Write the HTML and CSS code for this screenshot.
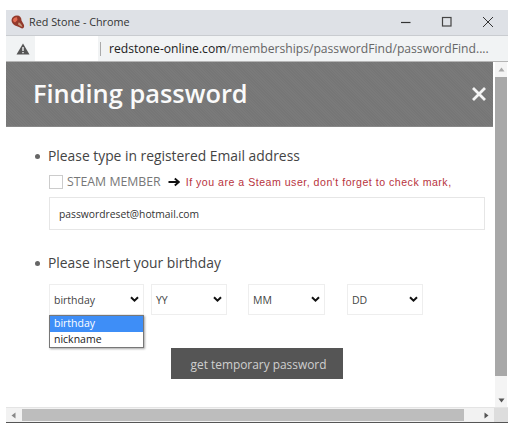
FILE: index.html
```html
<!DOCTYPE html>
<html lang="en">
<head>
<meta charset="utf-8">
<title>Red Stone - Chrome</title>
<link rel="stylesheet" href="styles.css">
</head>
<body>
<div class="window">
  <div class="titlebar">
    <svg class="favicon" width="14" height="14" viewBox="0 0 14 14"><path d="M0.5 5 C1 2 3 0.5 6 0.5 C9 0.5 10.5 2.5 10.5 5.5 L13 10 C13.5 12 12.5 13.5 11 13.5 L8 12 L4 10.5 C2 9.5 0.5 7.5 0.5 5 Z" fill="#93392b"/><path d="M2 5 C2.5 3 4 2 6 2.3 L6.5 5 L4 7.5 C2.8 7 2 6 2 5 Z" fill="#e26b52"/><path d="M7.5 7.5 C9 7.5 10.5 9 11.5 12 L9 11 L7 9.5 Z" fill="#c79a7c"/></svg>
    <span class="title">Red Stone - Chrome</span>
    <div class="controls">
      <svg width="14" height="14" viewBox="0 0 14 14"><path d="M2 7.5 H11.5" stroke="#333" stroke-width="1.2"/></svg>
      <svg width="14" height="14" viewBox="0 0 14 14"><rect x="2.5" y="2.5" width="8.5" height="8.5" fill="none" stroke="#444" stroke-width="1.2"/></svg>
      <svg width="14" height="14" viewBox="0 0 14 14"><path d="M2 2 L12 12 M12 2 L2 12" stroke="#333" stroke-width="1"/></svg>
    </div>
  </div>
  <div class="addressbar">
    <svg class="warn" width="14" height="12" viewBox="0 0 14 12"><path d="M7 0.5 L13.5 11.5 H0.5 Z" fill="#555"/><path d="M6.3 4 H7.7 V8 H6.3 Z M6.3 8.9 H7.7 V10.3 H6.3 Z" fill="#f1f3f4"/></svg>
    <div class="blank"></div>
    <div class="sep"></div>
    <div class="url">redstone-online.com<span class="path">/memberships/passwordFind/passwordFind....</span></div>
  </div>
  <div class="viewport">
    <main class="page">
      <header class="banner">
        <h1>Finding password</h1>
        <svg class="close" width="16" height="16" viewBox="0 0 16 16"><path d="M2 2 L14 14 M14 2 L2 14" stroke="#f4f4f4" stroke-width="2.8"/></svg>
      </header>
      <section class="section first">
        <h2 class="bullet">Please type in registered Email address</h2>
        <div class="steam">
          <span class="check"></span>
          <span class="steam-label">STEAM MEMBER</span>
          <svg class="arrow" width="12" height="10" viewBox="0 0 12 10"><path d="M0.5 5 H10.5 M6.8 1.5 L10.8 5 L6.8 8.5" fill="none" stroke="#111" stroke-width="1.8"/></svg>
          <span class="notice">If you are a Steam user, don't forget to check mark,</span>
        </div>
        <div class="field">passwordreset@hotmail.com</div>
      </section>
      <section class="section second">
        <h2 class="bullet">Please insert your birthday</h2>
        <div class="selects">
          <div class="select w-type">birthday<svg class="chev" width="9" height="7" viewBox="0 0 9 7"><path d="M1 1.2 L4.5 4.7 L8 1.2" fill="none" stroke="#111" stroke-width="2"/></svg>
            <ul class="menu">
              <li class="active">birthday</li>
              <li>nickname</li>
            </ul>
          </div>
          <div class="select w-yy">YY<svg class="chev" width="9" height="7" viewBox="0 0 9 7"><path d="M1 1.2 L4.5 4.7 L8 1.2" fill="none" stroke="#111" stroke-width="2"/></svg></div>
          <div class="select w-mm">MM<svg class="chev" width="9" height="7" viewBox="0 0 9 7"><path d="M1 1.2 L4.5 4.7 L8 1.2" fill="none" stroke="#111" stroke-width="2"/></svg></div>
          <div class="select w-dd">DD<svg class="chev" width="9" height="7" viewBox="0 0 9 7"><path d="M1 1.2 L4.5 4.7 L8 1.2" fill="none" stroke="#111" stroke-width="2"/></svg></div>
        </div>
        <button class="submit" type="button">get temporary password</button>
      </section>
    </main>
    <div class="vscroll">
      <svg width="7" height="5" viewBox="0 0 7 5"><path d="M3.5 0.5 L6.5 4.5 H0.5 Z" fill="#aaa"/></svg>
      <div class="vthumb"></div>
      <svg width="7" height="5" viewBox="0 0 7 5"><path d="M0.5 0.5 H6.5 L3.5 4.5 Z" fill="#555"/></svg>
    </div>
  </div>
  <div class="hscroll">
    <svg width="5" height="7" viewBox="0 0 5 7"><path d="M4.5 0.5 V6.5 L0.5 3.5 Z" fill="#888"/></svg>
    <div class="hthumb"></div>
    <svg width="5" height="7" viewBox="0 0 5 7"><path d="M0.5 0.5 V6.5 L4.5 3.5 Z" fill="#555"/></svg>
    <div class="corner"></div>
  </div>
</div>
</body>
</html>
```

FILE: styles.css
```css
* { box-sizing: border-box; }
html, body { margin: 0; padding: 0; background: #fff; }
body { width: 518px; height: 430px; overflow: hidden; font-family: "Open Sans", "Noto Sans", sans-serif; }
.window { margin: 10px 0 0 6px; width: 502px; height: 413px; display: flex; flex-direction: column; border-bottom: 1px solid #555; }
.titlebar { height: 26px; flex: none; background: #dee1e6; display: flex; align-items: center; padding: 0 13px 2px 5px; border-bottom: 1px solid #c9ccd0; }
.favicon { flex: none; }
.title { margin-left: 4px; font-size: 10.8px; color: #333; }
.controls { margin-left: auto; display: flex; gap: 27px; }
.addressbar { height: 26px; flex: none; background: #f1f3f4; display: flex; align-items: center; padding-left: 10px; border-bottom: 1px solid #b5b5b5; }
.warn { flex: none; }
.blank { width: 63px; height: 25px; margin-left: 5px; background: #fff; flex: none; }
.sep { width: 1px; height: 14px; background: #aaa; margin-left: 2px; flex: none; }
.url { margin-left: 8px; font-size: 12.15px; color: #222; white-space: nowrap; }
.path { color: #666; }
.viewport { flex: 1; min-height: 0; display: flex; }
.page { width: 487px; flex: none; background: #fff; }
.banner { height: 65px; background-color: #767676; background-image: repeating-linear-gradient(45deg, rgba(255,255,255,.03) 0 1px, transparent 1px 2px); display: flex; align-items: center; justify-content: space-between; padding: 0 6px 0 27px; border-bottom: 1px solid #888; }
.banner h1 { margin: 0; font-size: 25.4px; font-weight: 600; color: #fafafa; line-height: 1; }
.section { padding-left: 43px; }
.first { padding-top: 20px; }
.second { padding-top: 24px; }
.bullet { margin: 0 0 0 -1px; font-size: 13.85px; line-height: 18px; font-weight: 400; color: #444; position: relative; }
.bullet::before { content: ""; position: absolute; left: -13.5px; top: 7px; width: 5px; height: 5px; border-radius: 50%; background: #666; }
.steam { display: flex; align-items: center; margin-top: 9px; height: 15px; }
.check { width: 14px; height: 14px; border: 1px solid #ccc; background: #fff; flex: none; }
.steam-label { margin-left: 4px; font-size: 12.3px; color: #777; white-space: nowrap; }
.arrow { margin-left: 7px; flex: none; }
.notice { margin-left: 6px; font-family: "Liberation Sans", sans-serif; font-size: 10.6px; letter-spacing: 0.5px; color: #b8333d; white-space: nowrap; }
.field { margin-top: 8px; width: 436px; height: 33px; border: 1px solid #e6e6e6; display: flex; align-items: center; padding-left: 9px; font-size: 10.3px; color: #333; }
.selects { display: flex; margin-top: 12px; }
.select { height: 31px; border: 1px solid #eee; position: relative; display: flex; align-items: center; justify-content: space-between; padding: 0 4px 0 4px; font-size: 10.5px; color: #444; background: #fff; flex: none; }
.w-type { width: 95px; margin-right: 7px; }
.w-yy { width: 76px; margin-right: 21px; }
.w-mm { width: 77px; margin-right: 22px; }
.w-dd { width: 76px; }
.chev { flex: none; }
.menu { position: absolute; left: -1px; top: 30px; width: 95px; margin: 0; padding: 0; list-style: none; background: #fff; border: 1px solid #777; box-shadow: 1px 1px 2px rgba(0,0,0,.35); z-index: 2; font-size: 10.5px; color: #222; }
.menu li { height: 15.5px; line-height: 15px; padding-left: 4px; }
.menu .active { background: #3e8ef7; color: #fff; }
.submit { display: block; margin: 33px 0 0 122px; width: 172px; height: 31px; background: #555; border: 0; color: #cfcfcf; font-family: inherit; font-size: 11.9px; padding: 0 0 0 3px; }
.vscroll { flex: 1; display: flex; flex-direction: column; align-items: center; padding: 5px 0 4px; background: #f4f4f4; margin-left: 2px; margin-right: 1px; }
.vthumb { width: 12px; height: 299px; background: #a8a8a8; margin: 5px 0 auto; }
.hscroll { height: 15px; flex: none; display: flex; align-items: center; background: #f2f2f2; padding-left: 5px; border-top: 1px solid #e4e4e4; }
.hthumb { width: 442px; height: 12px; background: #bdbdbd; margin: 0 20px 0 6px; }
.corner { margin-left: auto; width: 14px; height: 14px; background: #ddd; }
```
